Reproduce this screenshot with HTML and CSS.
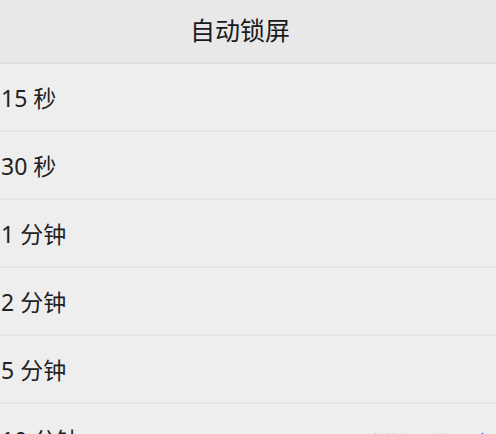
FILE: index.html
```html
<!DOCTYPE html>
<html lang="zh-CN">
<head>
    <meta charset="UTF-8">
    <meta name="viewport" content="width=device-width, initial-scale=1.0">
    <title>自动锁屏</title>
    <link rel="stylesheet" href="styles.css">
</head>
<body>
    <div class="screen">
        <div class="title-bar">自动锁屏</div>
        <ul class="options">
            <li class="option">15 秒</li>
            <li class="option">30 秒</li>
            <li class="option">1 分钟</li>
            <li class="option">2 分钟</li>
            <li class="option">5 分钟</li>
            <li class="option selected">
                <span>10 分钟</span>
                <span class="hint">当前设置时间</span>
                <svg class="check" width="20" height="20" viewBox="0 0 20 20">
                    <path d="M3 10.5l4.5 4.5 9-10" fill="none" stroke="#3a8ee6" stroke-width="2.4" stroke-linecap="round" stroke-linejoin="round"/>
                </svg>
            </li>
        </ul>
    </div>
</body>
</html>
```

FILE: styles.css
```css
body {
    margin: 0;
    background-color: #eeeeee;
    font-family: "Noto Sans", "Noto Sans CJK SC", sans-serif;
    color: #222;
}

.screen {
    width: 496px;
    height: 434px;
    overflow: hidden;
}

.title-bar {
    height: 62px;
    line-height: 60px;
    text-align: center;
    font-size: 25px;
    color: #1a1a1a;
    background-color: #e8e8e8;
    border-bottom: 2px solid #dedede;
    padding-right: 16px;
}

.options {
    list-style: none;
    margin: 0;
    padding: 0;
}

.option {
    height: 66px;
    display: flex;
    align-items: center;
    padding-left: 1px;
    font-size: 23px;
    border-bottom: 2px solid #e4e4e4;
}

.option.selected {
    height: 70px;
    padding-right: 10px;
}

.hint {
    margin-left: auto;
    margin-right: 8px;
    font-size: 15px;
    color: #b8b8b8;
}

.check {
    flex-shrink: 0;
}
```
